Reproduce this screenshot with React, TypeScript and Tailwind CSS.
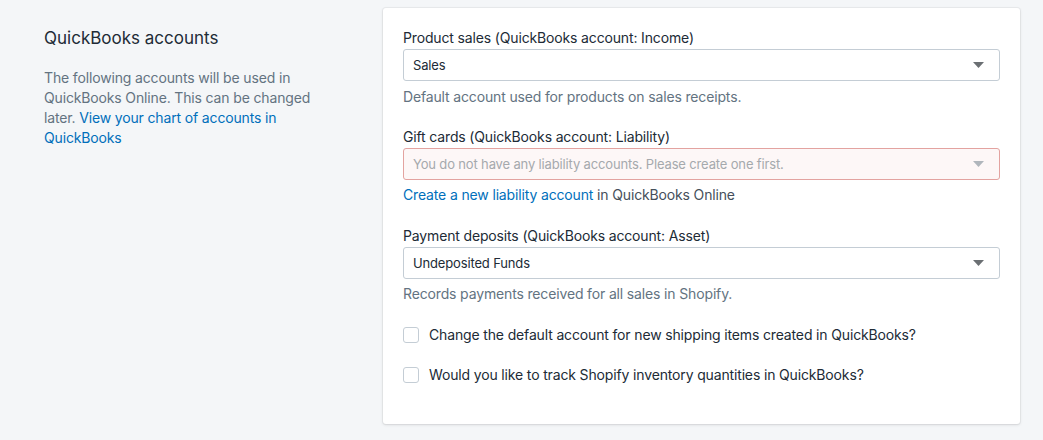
const font = { fontFamily: 'Inter, "Noto Sans", sans-serif' };

function Caret({ muted }: { muted?: boolean }) {
  return (
    <svg
      viewBox="0 0 11 6"
      className={`absolute right-[15px] top-1/2 -translate-y-1/2 w-[11px] h-[6px] ${muted ? 'text-[#b0b6bc]' : 'text-[#6b6f73]'}`}
    >
      <path d="M0 0h11L5.5 6z" fill="currentColor" />
    </svg>
  );
}

function Select({ value, error }: { value: string; error?: boolean }) {
  return (
    <div
      className={`relative h-8 rounded-[3px] border flex items-center pl-[9px] text-[13px] ${
        error ? 'border-[#e3a3a0] bg-[#fdf7f7] text-[#a5a9ad]' : 'border-[#c4cdd5] bg-white text-[#212b36]'
      }`}
    >
      <span>{value}</span>
      <Caret muted={error} />
    </div>
  );
}

function Checkbox({ label }: { label: string }) {
  return (
    <label className="flex items-center gap-[10px] h-5 text-sm tracking-[-0.15px] text-[#212b36]">
      <span className="w-4 h-4 rounded-[3px] border border-[#c4cdd5] bg-white shrink-0" />
      <span>{label}</span>
    </label>
  );
}

export default function App() {
  return (
    <div className="min-h-[440px] bg-[#f4f6f8] text-[#212b36] flex pt-2" style={font}>
      <div className="w-[383px] shrink-0 pl-11 pt-[18px]">
        <h2 className="text-[17px] leading-6 text-[#212b36]">QuickBooks accounts</h2>
        <p className="mt-[18px] w-[275px] text-sm leading-5 tracking-[-0.15px] text-[#637381]">
          The following accounts will be used in QuickBooks Online. This can be changed later.{' '}
          <a className="text-[#006fbb]">View your chart of accounts in QuickBooks</a>
        </p>
      </div>

      <div className="w-[637px] h-[416px] bg-white rounded-[3px] shadow-[0_0_0_1px_rgba(63,63,68,0.05),0_1px_3px_0_rgba(63,63,68,0.15)] px-5 pt-5 text-sm leading-5 tracking-[-0.15px]">
        <div className="mb-px">Product sales (QuickBooks account: Income)</div>
        <Select value="Sales" />
        <p className="mt-[6px] text-[#637381]">Default account used for products on sales receipts.</p>

        <div className="mt-5 mb-px">Gift cards (QuickBooks account: Liability)</div>
        <Select value="You do not have any liability accounts. Please create one first." error />
        <p className="mt-[5px] text-[#454f5b]">
          <a className="text-[#006fbb]">Create a new liability account</a> in QuickBooks Online
        </p>

        <div className="mt-[21px] mb-px">Payment deposits (QuickBooks account: Asset)</div>
        <Select value="Undeposited Funds" />
        <p className="mt-[5px] text-[#637381]">Records payments received for all sales in Shopify.</p>

        <div className="mt-[21px] flex flex-col gap-5">
          <Checkbox label="Change the default account for new shipping items created in QuickBooks?" />
          <Checkbox label="Would you like to track Shopify inventory quantities in QuickBooks?" />
        </div>
      </div>
    </div>
  );
}
